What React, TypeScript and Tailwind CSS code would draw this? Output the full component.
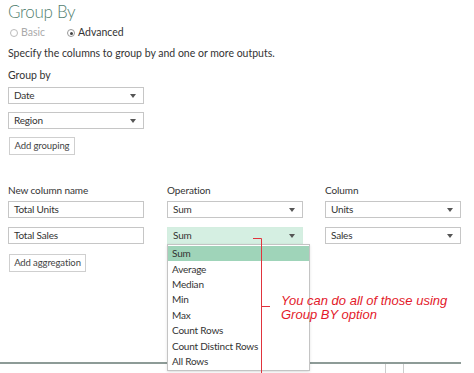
import React from 'react';

const FONT = "font-['Segoe_UI','Lato','Open_Sans',sans-serif]";

const Caret = () => (
  <svg width="6" height="4" viewBox="0 0 6 4" className="shrink-0">
    <path d="M0 0h6L3 4z" fill="#555" />
  </svg>
);

const Select = ({ value, active = false }: { value: string; active?: boolean }) => (
  <div
    className={`flex h-[17px] w-[136px] items-center justify-between border pl-[5px] pr-[7px] text-[10px] tracking-[-0.2px] ${
      active ? 'border-[#d4eee0] bg-[#d5efe2]' : 'border-[#c6c6c6] bg-white'
    }`}
  >
    <span>{value}</span>
    <Caret />
  </div>
);

const Input = ({ value }: { value: string }) => (
  <div className="flex h-[17px] w-[136px] items-center border border-[#c6c6c6] bg-white pl-[5px] text-[10px] tracking-[-0.2px]">
    {value}
  </div>
);

const Btn = ({ label, w }: { label: string; w: string }) => (
  <button
    type="button"
    className={`flex h-[18px] ${w} items-center justify-center border border-[#cfcfcf] bg-white text-[9.5px] tracking-[-0.1px] text-[#444]`}
  >
    {label}
  </button>
);

const options = ['Sum', 'Average', 'Median', 'Min', 'Max', 'Count Rows', 'Count Distinct Rows', 'All Rows'];

export default function App() {
  return (
    <div className={`relative flex h-[373px] w-[474px] flex-col overflow-hidden bg-white text-[#333] ${FONT}`}>
      <div className="pl-2">
        <h1 className="h-[22px] text-[17px] font-light leading-[24px] tracking-[-0.3px] text-[#52806f]">Group By</h1>

        {/* radio row */}
        <div className="mt-[3px] flex h-4 items-center text-[10.5px]">
          <span className="ml-[2px] h-[8px] w-[8px] rounded-full border border-[#bbb]" />
          <span className="ml-[3px] text-[#aaa]">Basic</span>
          <span className="ml-[22px] flex h-[8px] w-[8px] items-center justify-center rounded-full border border-[#999]">
            <span className="h-[3px] w-[3px] rounded-full bg-[#444]" />
          </span>
          <span className="ml-[3px]">Advanced</span>
        </div>

        <p className="mt-1 h-4 text-[10.5px] leading-4">Specify the columns to group by and one or more outputs.</p>
        <p className="mt-[6px] h-4 text-[10.5px] leading-4">Group by</p>

        <div className="mt-1 flex flex-col gap-2">
          <Select value="Date" />
          <Select value="Region" />
        </div>
        <div className="mt-2 pl-[1px]">
          <Btn label="Add grouping" w="w-[66px]" />
        </div>

        <div className="mt-[27px] grid grid-cols-[136px_136px_136px] gap-x-[22px] text-[10px] tracking-[-0.1px]">
          <div className="flex flex-col">
            <span className="h-4 leading-4">New column name</span>
            <div className="mt-[3px] flex flex-col gap-[9px]">
              <Input value="Total Units" />
              <Input value="Total Sales" />
            </div>
            <div className="mt-[10px] pl-[1px]">
              <Btn label="Add aggregation" w="w-[77px]" />
            </div>
          </div>
          <div className="flex flex-col pl-[1px]">
            <span className="h-4 leading-4">Operation</span>
            <div className="mt-[3px] flex flex-col gap-[9px]">
              <Select value="Sum" />
              <Select value="Sum" active />
            </div>
          </div>
          <div className="flex flex-col pl-[1px]">
            <span className="h-4 leading-4">Column</span>
            <div className="mt-[3px] flex flex-col gap-[9px]">
              <Select value="Units" />
              <Select value="Sales" />
            </div>
          </div>
        </div>
      </div>

      {/* dialog footer edge */}
      <div className="mt-auto flex h-[11px] w-[461px] border-t-2 border-[#8d9b97]">
        <span className="ml-[385px] h-full w-px bg-[#ccc]" />
        <span className="ml-[17px] h-full w-px bg-[#ccc]" />
      </div>

      {/* open dropdown list */}
      <ul className="absolute left-[167px] top-[244px] w-[143px] border border-[#c4c4c4] bg-white py-px text-[10px] tracking-[-0.2px] shadow-sm">
        {options.map((o, i) => (
          <li
            key={o}
            className={`flex h-[15.4px] items-center pl-[4px] ${i === 0 ? 'bg-[#9fd4b9]' : ''}`}
          >
            {o}
          </li>
        ))}
      </ul>

      {/* annotation */}
      <svg className="pointer-events-none absolute left-0 top-0" width="474" height="373">
        <path d="M253 238.5H261.5V373M261.5 306.5H270" stroke="#e0343d" strokeWidth="1" fill="none" />
      </svg>
      <div className="absolute left-[281px] top-[294px] text-[13px] italic leading-[14px] text-[#e3192a] font-['Liberation_Sans',sans-serif]">
        <div>You can do all of those using</div>
        <div>Group BY option</div>
      </div>
    </div>
  );
}
